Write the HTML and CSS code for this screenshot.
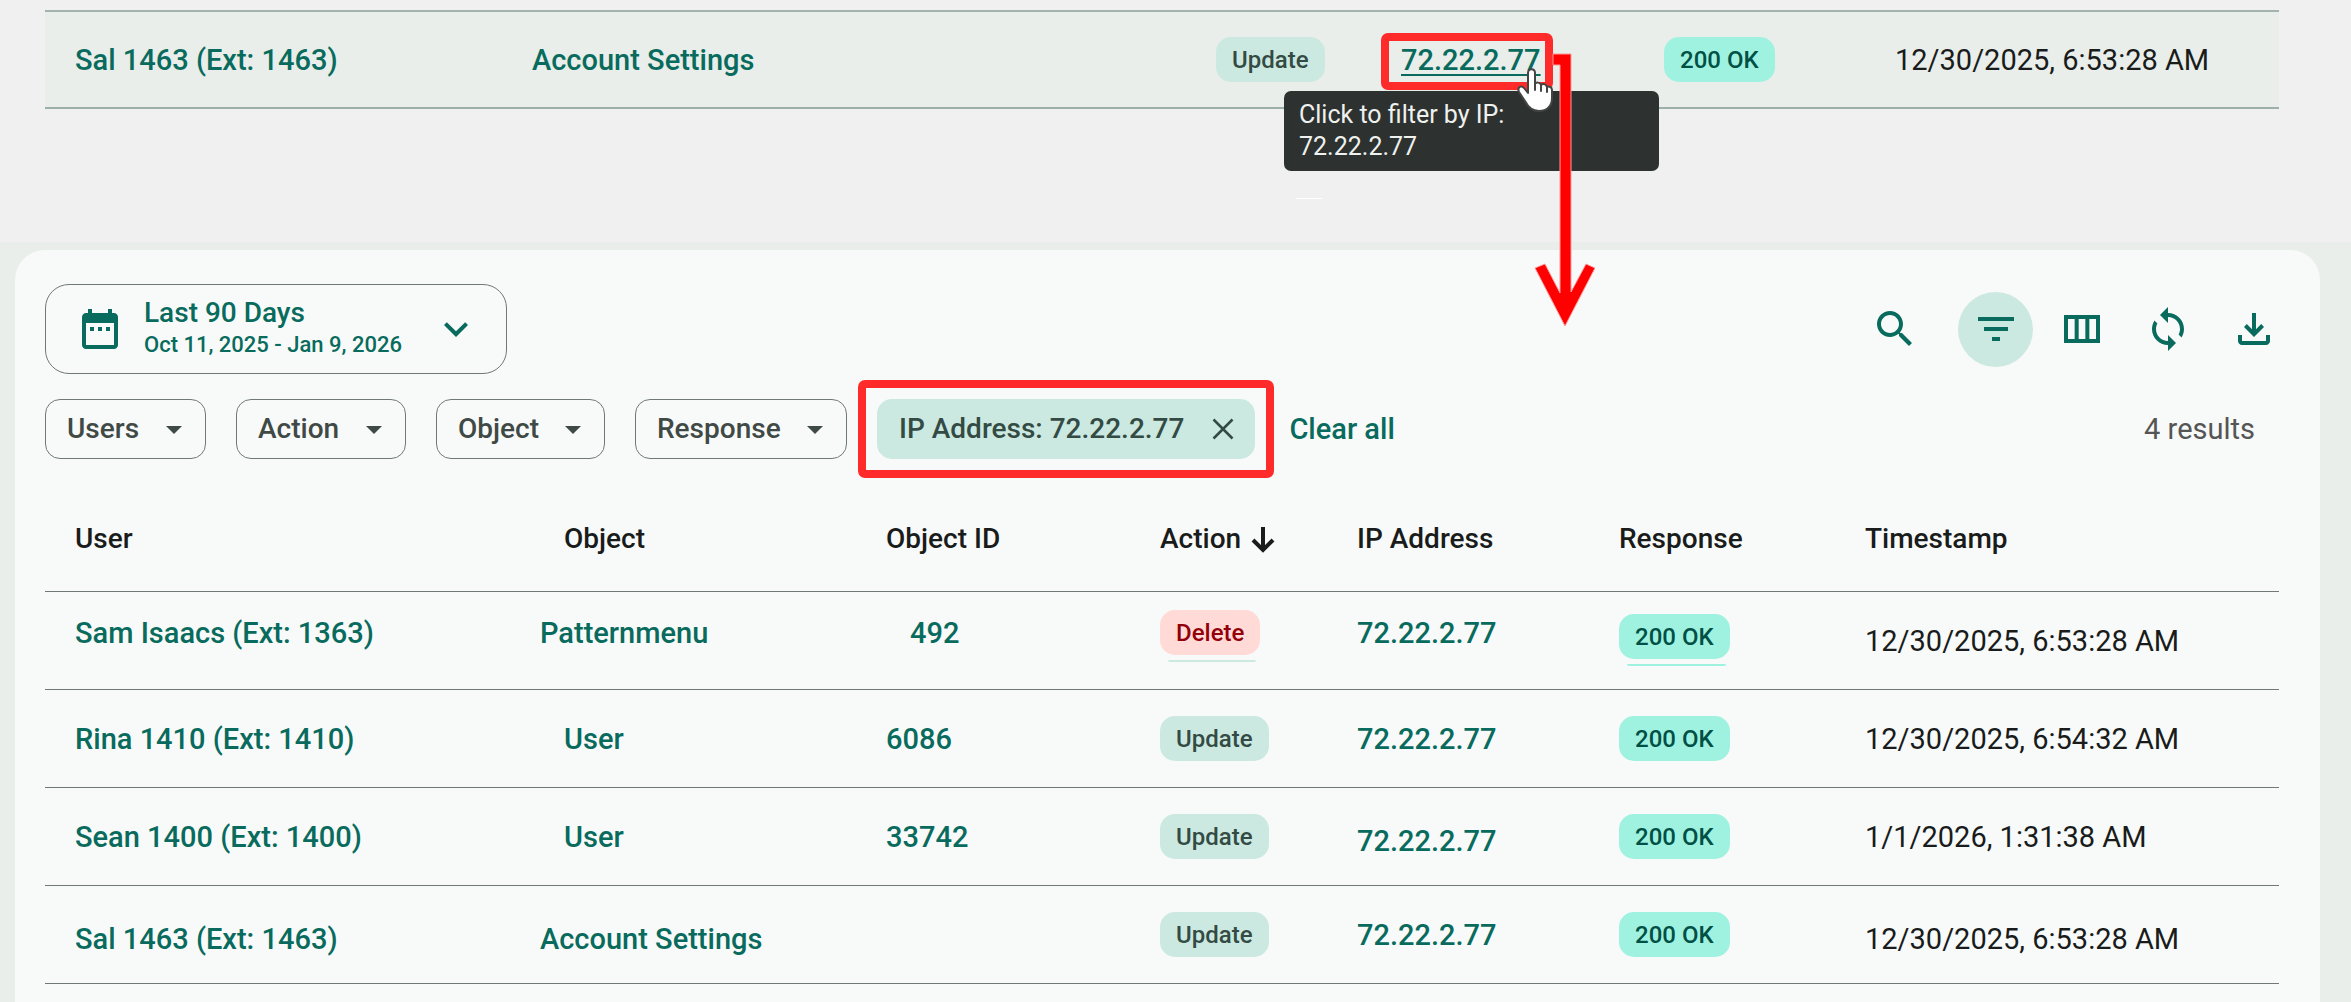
FILE: index.html
```html
<!DOCTYPE html>
<html lang="en">
<head>
    <meta charset="UTF-8">
    <meta name="viewport" content="width=device-width, initial-scale=1.0">
    <title>Audit Log</title>
    <link rel="stylesheet" href="styles.css">
</head>
<body>
    <section class="preview">
        <table class="log-table preview-table">
            <colgroup>
                <col class="p-user"><col class="p-object"><col class="p-action"><col class="p-ip"><col class="p-response"><col>
            </colgroup>
            <tr>
                <td><a href="#">Sal 1463 (Ext: 1463)</a></td>
                <td><a href="#">Account Settings</a></td>
                <td><span class="badge update">Update</span></td>
                <td>
                    <div class="ip-hover">
                        <a href="#" class="hovered">72.22.2.77</a>
                        <div class="tooltip" role="tooltip">Click to filter by IP:<br>72.22.2.77</div>
                        <svg class="arrow" width="62" height="274" viewBox="0 0 62 274">
                            <path d="M20 2h18v238l15-28 9 4-30 58-30-58 10-4 15 29V13h-7z" fill="#fe0000" stroke="#f99" stroke-width="1"/>
                        </svg>
                        <svg class="hand" width="36" height="44" viewBox="0 0 36 44">
                            <path d="M11 25V5c0-5 7-5 7 0v11c1-2 5-2 6 1 2-2 5-1 6 2 2-1 5 0 5 3v8c0 8-5 13-13 13-7 0-11-4-14-10L2 24c-2-5 2-7 5-4z" fill="#fff" stroke="#444" stroke-width="2" stroke-linejoin="round"/>
                            <path d="M18 15v7M24 17v6M30 19v5" fill="none" stroke="#444" stroke-width="2" stroke-linecap="round"/>
                        </svg>
                    </div>
                </td>
                <td><span class="badge ok">200 OK</span></td>
                <td>12/30/2025, 6:53:28 AM</td>
            </tr>
        </table>
    </section>

    <main class="page">
        <div class="panel">
            <div class="toolbar">
                <button class="date-range" type="button">
                    <svg class="icon" viewBox="0 0 24 24"><path d="M9 11H7v2h2v-2zm4 0h-2v2h2v-2zm4 0h-2v2h2v-2zm2-7h-1V2h-2v2H8V2H6v2H5c-1.11 0-1.99.9-1.99 2L3 20c0 1.1.89 2 2 2h14c1.1 0 2-.9 2-2V6c0-1.1-.9-2-2-2zm0 16H5V9h14v11z"/></svg>
                    <span class="date-text">
                        <span class="date-title">Last 90 Days</span>
                        <span class="date-detail">Oct 11, 2025 - Jan 9, 2026</span>
                    </span>
                    <svg class="icon" viewBox="0 0 24 24"><path d="M7.41 8.59 12 13.17l4.59-4.58L18 10l-6 6-6-6 1.41-1.41z"/></svg>
                </button>
                <div class="actions">
                    <button type="button" aria-label="Search"><svg class="icon" viewBox="0 0 24 24"><path d="M15.5 14h-.79l-.28-.27C15.41 12.59 16 11.11 16 9.5 16 5.91 13.09 3 9.5 3S3 5.91 3 9.5 5.91 16 9.5 16c1.61 0 3.09-.59 4.23-1.57l.27.28v.79l5 4.99L20.49 19l-4.99-5zm-6 0C7.01 14 5 11.99 5 9.5S7.01 5 9.5 5 14 7.01 14 9.5 11.99 14 9.5 14z"/></svg></button>
                    <button type="button" class="active" aria-label="Filters"><svg class="icon" viewBox="0 0 24 24"><path d="M10 18h4v-2h-4v2zM3 6v2h18V6H3zm3 7h12v-2H6v2z"/></svg></button>
                    <button type="button" aria-label="Columns"><svg class="icon" viewBox="0 0 24 24"><path d="M3 5v14h18V5H3zm5.33 12H5V7h3.33v10zm5.34 0h-3.33V7h3.33v10zM19 17h-3.33V7H19v10z"/></svg></button>
                    <button type="button" aria-label="Refresh"><svg class="icon" viewBox="0 0 24 24"><path d="M12 4V1L8 5l4 4V6c3.31 0 6 2.69 6 6 0 1.01-.25 1.97-.7 2.8l1.46 1.46C19.54 15.03 20 13.57 20 12c0-4.42-3.58-8-8-8zm0 14c-3.31 0-6-2.69-6-6 0-1.01.25-1.97.7-2.8L5.24 7.74C4.46 8.97 4 10.43 4 12c0 4.42 3.58 8 8 8v3l4-4-4-4v3z"/></svg></button>
                    <button type="button" aria-label="Download"><svg class="icon" viewBox="0 0 24 24"><path d="M12 16l-5-5 1.4-1.45 2.6 2.6V4h2v8.15l2.6-2.6L17 11l-5 5zm-6 4c-.55 0-1.02-.2-1.41-.59C4.2 19.02 4 18.55 4 18v-3h2v3h12v-3h2v3c0 .55-.2 1.02-.59 1.41-.39.39-.86.59-1.41.59H6z"/></svg></button>
                </div>
            </div>

            <div class="filters">
                <div class="chip">
                    <select aria-label="Users"><option>Users</option></select>
                    <svg class="caret" viewBox="0 0 16 8"><path d="M0 0h16L8 8z"/></svg>
                </div>
                <div class="chip">
                    <select aria-label="Action"><option>Action</option></select>
                    <svg class="caret" viewBox="0 0 16 8"><path d="M0 0h16L8 8z"/></svg>
                </div>
                <div class="chip">
                    <select aria-label="Object"><option>Object</option></select>
                    <svg class="caret" viewBox="0 0 16 8"><path d="M0 0h16L8 8z"/></svg>
                </div>
                <div class="chip">
                    <select aria-label="Response"><option>Response</option></select>
                    <svg class="caret" viewBox="0 0 16 8"><path d="M0 0h16L8 8z"/></svg>
                </div>
                <button class="selected-chip" type="button">
                    IP Address: 72.22.2.77
                    <svg width="22" height="22" viewBox="0 0 22 22"><path d="M1.500 1.500l19 19M20.500 1.500l-19 19" fill="none" stroke="#334b44" stroke-width="2.500"/></svg>
                </button>
                <button class="clear" type="button">Clear all</button>
                <span class="results">4 results</span>
            </div>

            <table class="log-table">
                <colgroup>
                    <col class="c-user"><col class="c-object"><col class="c-id"><col class="c-action"><col class="c-ip"><col class="c-response"><col>
                </colgroup>
                <thead>
                    <tr>
                        <th>User</th>
                        <th>Object</th>
                        <th>Object ID</th>
                        <th>Action <svg class="sort" viewBox="0 0 24 28"><path d="M12 1v23M2 14l10 10 10-10" fill="none" stroke="#191c1b" stroke-width="4"/></svg></th>
                        <th>IP Address</th>
                        <th>Response</th>
                        <th>Timestamp</th>
                    </tr>
                </thead>
                <tbody>
                    <tr>
                        <td class="raised"><a href="#">Sam Isaacs (Ext: 1363)</a></td>
                        <td class="raised outdent"><a href="#">Patternmenu</a></td>
                        <td class="raised indent"><a href="#">492</a></td>
                        <td class="raised"><span class="badge delete edge">Delete</span></td>
                        <td class="raised"><a href="#">72.22.2.77</a></td>
                        <td class="raised-half"><span class="badge ok edge">200 OK</span></td>
                        <td>12/30/2025, 6:53:28 AM</td>
                    </tr>
                    <tr>
                        <td><a href="#">Rina 1410 (Ext: 1410)</a></td>
                        <td><a href="#">User</a></td>
                        <td><a href="#">6086</a></td>
                        <td><span class="badge update">Update</span></td>
                        <td><a href="#">72.22.2.77</a></td>
                        <td><span class="badge ok">200 OK</span></td>
                        <td>12/30/2025, 6:54:32 AM</td>
                    </tr>
                    <tr>
                        <td><a href="#">Sean 1400 (Ext: 1400)</a></td>
                        <td><a href="#">User</a></td>
                        <td><a href="#">33742</a></td>
                        <td><span class="badge update">Update</span></td>
                        <td class="lowered"><a href="#">72.22.2.77</a></td>
                        <td><span class="badge ok">200 OK</span></td>
                        <td>1/1/2026, 1:31:38 AM</td>
                    </tr>
                    <tr>
                        <td class="lowered"><a href="#">Sal 1463 (Ext: 1463)</a></td>
                        <td class="lowered outdent"><a href="#">Account Settings</a></td>
                        <td></td>
                        <td><span class="badge update">Update</span></td>
                        <td><a href="#">72.22.2.77</a></td>
                        <td><span class="badge ok">200 OK</span></td>
                        <td class="lowered">12/30/2025, 6:53:28 AM</td>
                    </tr>
                </tbody>
            </table>
        </div>
    </main>
</body>
</html>
```
FILE: styles.css
```css
* {
    box-sizing: border-box;
}
body {
    margin: 0;
    min-height: 100vh;
    display: flex;
    flex-direction: column;
    background-color: #f0f0f0;
    font-family: Roboto, sans-serif;
    font-size: 28px;
    line-height: 32px;
    color: #191c1b;
}
button, select {
    font: inherit;
    font-weight: 500;
    background: none;
    border: none;
    padding: 0;
    cursor: pointer;
}
a {
    color: #086b5d;
    font-weight: 500;
    text-decoration: none;
}
.icon {
    width: 48px;
    height: 48px;
    fill: #086b5d;
}

/* hovered row */
.preview {
    padding: 10px 72px 133px 45px;
}
.preview .log-table td {
    height: 99px;
    background-color: #e9eeea;
    border-top: 2px solid #a3b3ad;
    border-bottom: 2px solid #9ab0a8;
}
.p-user { width: 487px; }
.p-object { width: 684px; }
.p-action { width: 185px; }
.p-ip { width: 263px; }
.p-response { width: 231px; }

.ip-hover {
    position: relative;
    width: 142px;
}
.hovered {
    text-decoration: underline;
    text-decoration-thickness: 2px;
    text-underline-offset: 4px;
}
.ip-hover::before {
    content: "";
    position: absolute;
    inset: -11px -10px -14px -20px;
    border: 8px solid #ff2b2b;
    border-radius: 7px;
}
.tooltip {
    position: absolute;
    z-index: 1;
    top: 47px;
    left: -117px;
    width: 375px;
    padding: 8px 15px;
    border-radius: 7px;
    background-color: #2d312f;
    color: #eff1ef;
    font-size: 25px;
}
.tooltip::after {
    content: "";
    position: absolute;
    top: 107px;
    left: 12px;
    width: 26px;
    height: 1px;
    background-color: #fff;
}
.arrow {
    position: absolute;
    z-index: 2;
    top: 8px;
    left: 132px;
}
.hand {
    position: absolute;
    z-index: 3;
    top: 24px;
    left: 116px;
}

/* main panel */
.page {
    flex: 1;
    display: flex;
    padding: 8px 31px 0 15px;
    background-color: #e9eeea;
}
.panel {
    flex: 1;
    padding: 34px 41px 0 30px;
    border-radius: 30px 30px 0 0;
    background-color: #f8faf9;
}
.toolbar {
    display: flex;
    justify-content: space-between;
    align-items: center;
}
.date-range {
    display: flex;
    align-items: center;
    height: 90px;
    padding: 0 26px 0 30px;
    border: 1px solid #6f7975;
    border-radius: 24px;
    color: #086b5d;
    text-align: left;
}
.date-text {
    display: flex;
    flex-direction: column;
    margin: 0 30px 0 20px;
}
.date-detail {
    font-size: 22px;
}
.actions {
    display: flex;
    gap: 11px;
    margin-right: -12px;
}
.actions button {
    display: grid;
    place-items: center;
    width: 75px;
    height: 75px;
    border-radius: 50%;
}
.actions .active {
    margin-left: 15px;
    background-color: #cbe9e0;
}
.filters {
    display: flex;
    align-items: center;
    margin-top: 25px;
}
.chip {
    position: relative;
    margin-right: 30px;
}
.chip select {
    appearance: none;
    height: 60px;
    padding: 0 65px 0 21px;
    border: 1px solid #6f7975;
    border-radius: 15px;
    color: #3f4945;
}
.caret {
    position: absolute;
    top: 27px;
    right: 24px;
    width: 16px;
    height: 8px;
    fill: #3f4945;
    pointer-events: none;
}
.selected-chip {
    position: relative;
    display: flex;
    align-items: center;
    gap: 28px;
    height: 60px;
    padding: 0 21px 0 22px;
    border-radius: 15px;
    background-color: #cbe9e0;
    color: #334b44;
}
.selected-chip::after {
    content: "";
    position: absolute;
    inset: -19px;
    border: 8px solid #ff2b2b;
    border-radius: 7px;
}
.clear {
    margin-left: 34px;
    color: #086b5d;
    font-size: 29px;
}
.results {
    margin-left: auto;
    padding-right: 24px;
    color: #555;
    font-size: 29px;
}

/* log table */
.log-table {
    width: 100%;
    table-layout: fixed;
    border-collapse: separate;
    border-spacing: 0;
    white-space: nowrap;
}
.log-table th, .log-table td {
    height: 98px;
    padding: 0;
    border-bottom: 1px solid #6f7975;
    text-align: left;
}
.log-table td {
    font-size: 29px;
}
.log-table th {
    height: 106px;
    font-weight: 500;
}
.panel .log-table {
    margin-top: 27px;
}
.log-table tr > :first-child {
    padding-left: 30px;
}
.c-user { width: 519px; }
.c-object { width: 322px; }
.c-id { width: 274px; }
.c-action { width: 197px; }
.c-ip { width: 262px; }
.c-response { width: 246px; }
.log-table .raised { padding-bottom: 16px; }
.log-table .raised-half { padding-bottom: 8px; }
.log-table .lowered { padding-top: 8px; }
.log-table .indent { padding-left: 24px; }
.outdent a { margin-left: -24px; }
.sort {
    width: 24px;
    height: 28px;
    margin-left: 3px;
    vertical-align: middle;
}

.badge {
    display: inline-block;
    position: relative;
    padding: 7px 16px 6px;
    border-radius: 15px;
    font-size: 24px;
    font-weight: 500;
    vertical-align: middle;
}
.update {
    background-color: #cbe9e0;
    color: #334b44;
}
.delete {
    background-color: #ffdad6;
    color: #93000a;
}
.ok {
    background-color: #a0f2e0;
    color: #005046;
}
.edge::after {
    content: "";
    position: absolute;
    right: 4px;
    bottom: -7px;
    left: 8px;
    height: 2px;
    border-radius: 0 0 8px 8px;
    background-color: #a0f2e0;
}
.delete::after {
    background-color: #cbe9e0;
}
```
